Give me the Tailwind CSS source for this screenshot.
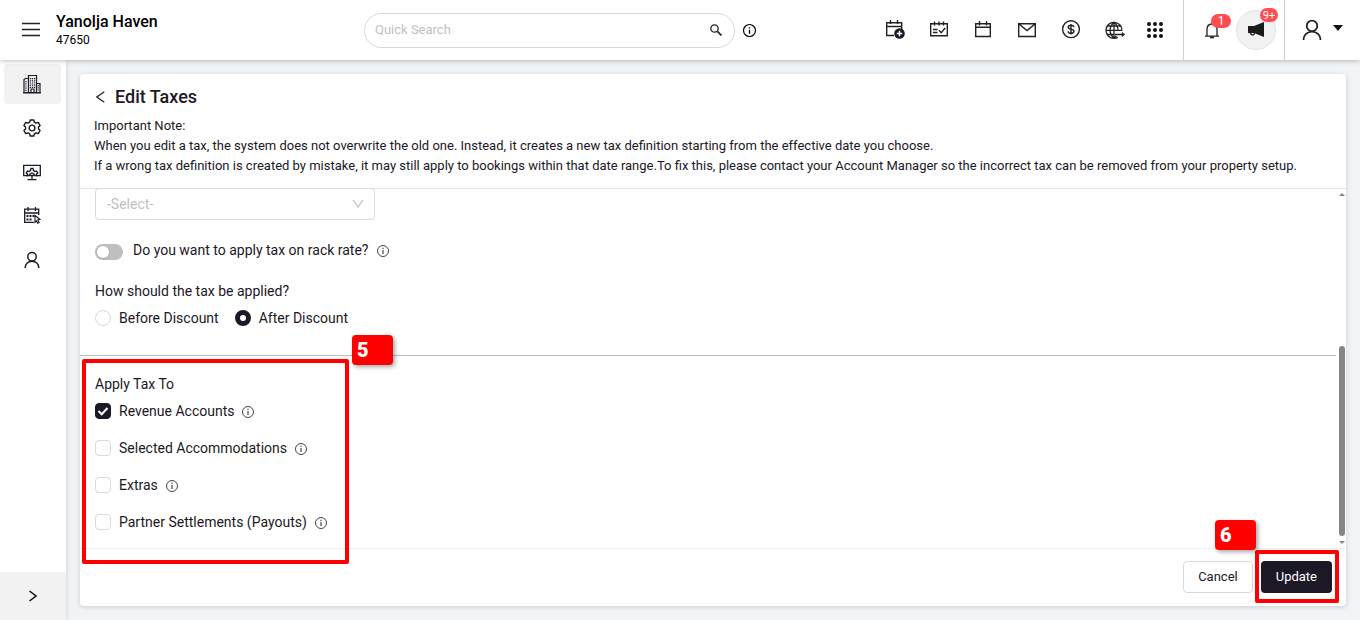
<!DOCTYPE html>
<html lang="en">
<head>
<meta charset="utf-8">
<title>Edit Taxes</title>
<script src="https://cdn.jsdelivr.net/npm/@tailwindcss/browser@4"></script>
</head>
<body class="flex min-h-screen flex-col bg-[#f0f4f7] font-['Roboto',sans-serif] text-sm text-[#1c1826]">
<svg class="hidden">
  <symbol id="info" viewBox="0 0 14 14"><circle cx="7" cy="7" r="5.5" fill="none" stroke="currentColor" stroke-width="1"/><path d="M7 6v4M7 3.8v1.2" stroke="currentColor" stroke-width="1.2"/></symbol>
  <symbol id="person" viewBox="0 0 22 24"><circle cx="11" cy="7.5" r="5.8" fill="none" stroke="currentColor" stroke-width="2"/><path d="M1.6 23c0-5.600 4.200-9.300 9.400-9.300s9.400 3.700 9.400 9.300" fill="none" stroke="currentColor" stroke-width="2"/></symbol>
</svg>

<header class="relative z-20 flex h-15 items-center bg-white shadow-[0_1px_5px_rgba(0,0,0,0.25)]">
  <div class="flex min-w-60 flex-none basis-[364px] items-center">
    <button aria-label="Menu" class="ml-[22px] mr-4"><svg class="h-4 w-[18px]" viewBox="0 0 18 16" stroke="#222" stroke-width="1.300"><path d="M0 1.500h18M0 7.500h18M0 13.500h18"/></svg></button>
    <div>
      <div class="text-base leading-5 font-medium text-black">Yanolja Haven</div>
      <div class="text-xs leading-4 text-black">47650</div>
    </div>
  </div>
  <div class="flex h-[35px] w-[371px] items-center rounded-full border border-[#d9d9d9] pl-2.5 pr-3">
    <input type="text" aria-label="Quick Search" placeholder="Quick Search" class="min-w-0 flex-1 text-[13px] outline-none placeholder:text-[#bfbfbf]">
    <button aria-label="Search"><svg class="size-3" viewBox="0 0 12 12" fill="none" stroke="#222"><circle cx="4.500" cy="4.500" r="3.700" stroke-width="1.300"/><path d="M7.300 7.300l4.200 4.200" stroke-width="1.700"/></svg></button>
  </div>
  <button aria-label="Search help" class="ml-[7px] text-black"><svg class="size-[15px]" viewBox="0 0 14 14"><circle cx="7" cy="7" r="5.600" fill="none" stroke="currentColor" stroke-width="1.100"/><path d="M7 6.200v3.800M7 4v1.200" stroke="currentColor" stroke-width="1.200"/></svg></button>

  <nav aria-label="Shortcuts" class="mr-[18px] ml-auto flex items-center gap-6">
    <button aria-label="New booking"><svg class="size-5" viewBox="0 0 20 20" fill="none" stroke="#222" stroke-width="1.400"><path d="M9 15.500H1.700V2.700h15V10M1.700 6.500h15M5.500 0v4M12.500 0v4"/><circle cx="14.500" cy="13.500" r="5.300" fill="#1c1826" stroke="none"/><path d="M14.500 10.800v5.400M11.800 13.500h5.400" stroke="#fff"/></svg></button>
    <button aria-label="Tasks"><svg class="size-5" viewBox="0 0 20 20" fill="none" stroke="#222" stroke-width="1.400"><path d="M1.700 3.700h16.600v12H1.700zM5.500 1.500v4M10 1.500v4M14.500 1.500v4M4 9.500h4.500M4 12.500h4.500M10 10.200l2.200 2.400 4-4.600"/></svg></button>
    <button aria-label="Calendar"><svg class="size-5" viewBox="0 0 20 20" fill="none" stroke="#222" stroke-width="1.400"><path d="M2.700 3.700h14.600v12.800H2.700zM2.700 7.300h14.600M6.500 1v4.500M13.500 1v4.500"/></svg></button>
    <button aria-label="Mail"><svg class="size-5" viewBox="0 0 20 20" fill="none" stroke="#222" stroke-width="1.400"><path d="M1.700 3.700h16.600v12.800H1.700zM2 4l8 6.500L18 4"/></svg></button>
    <button aria-label="Payments"><svg class="size-5" viewBox="0 0 20 20" fill="none" stroke="#222" stroke-width="1.400"><circle cx="10" cy="9.200" r="8.400"/><path d="M10 4v10.400M12.800 7.200c0-1.300-1.200-2-2.800-2s-2.800.7-2.800 2 1 1.700 2.800 2 2.900.7 2.900 2.100-1.300 2.100-2.900 2.100-2.900-.8-2.900-2.200"/></svg></button>
    <button aria-label="Website"><svg class="size-5" viewBox="0 0 20 20" fill="none" stroke="#222" stroke-width="1.300"><path d="M17 10.500A8 8 0 1 0 9 18.300c1.500 0 2.700-.3 3.800-.9M1 10.300h16M2.500 6h13.200M2.500 14.500H9M9 2.300v16M9 2.300C3.800 7 3.800 13.500 9 18.300M9 2.300c3 2.500 4.200 5.300 4 8.700M9 18.300c1-.8 1.700-1.600 2.300-2.500M10 14.500h9.500"/><path d="M16.800 11.800l3 2.700-3 2.700z" fill="#222" stroke="none"/></svg></button>
    <button aria-label="Apps" class="-ml-1"><svg class="size-5" viewBox="0 0 20 20" fill="#111"><circle cx="4" cy="4" r="2"/><circle cx="10" cy="4" r="2"/><circle cx="16" cy="4" r="2"/><circle cx="4" cy="10" r="2"/><circle cx="10" cy="10" r="2"/><circle cx="16" cy="10" r="2"/><circle cx="4" cy="16" r="2"/><circle cx="10" cy="16" r="2"/><circle cx="16" cy="16" r="2"/></svg></button>
  </nav>
  <div class="flex h-full items-center gap-3.5 border-x border-[#d0d0d0] pr-2 pl-[18px]">
    <button aria-label="Notifications" class="relative"><svg class="h-5 w-5" viewBox="0 0 20 20" fill="none" stroke="#222" stroke-width="1.300"><path d="M3 16.200h14M5 16v-6.500C5 6 7 4 10 4s5 2 5 5.500V16M10 4V2.500"/><path d="M8 16.500h4v1.800H8z" fill="#222" stroke="none"/></svg><span class="absolute -top-1.5 left-[9px] flex h-3.5 w-5 items-center justify-center rounded-full bg-[#ff4d4f] text-xs leading-none text-white">1</span></button>
    <button aria-label="Announcements" class="relative flex size-10 items-center justify-center rounded-full border border-[#e3e3e3] bg-[#f2f2f2]"><svg class="h-5 w-[18px]" viewBox="0 0 18 20" fill="#1b1b1b"><path d="M1 6h6l10-4v15L7 13H1z"/><path d="M3.500 12.500c0 3 4 3 4 .5" fill="none" stroke="#1b1b1b" stroke-width="1.300"/></svg><span class="absolute -top-[3px] left-[23px] flex h-3.5 w-[18px] items-center justify-center rounded-full bg-[#ff4d4f] text-[11px] leading-none text-white">9+</span></button>
  </div>
  <button aria-label="Account" class="flex items-center gap-[11px] pr-[17px] pl-[17px]"><svg class="h-[22px] w-5 text-[#222]"><use href="#person"/></svg><svg class="mb-1 h-1.5 w-2.5" viewBox="0 0 10 6"><path d="M0 0h10L5 6z" fill="#111"/></svg></button>
</header>

<div class="flex flex-1">
  <aside class="z-10 flex w-[66px] flex-none flex-col bg-white shadow-[0_0_5px_rgba(0,0,0,0.15)]">
    <nav aria-label="Main" class="flex flex-col gap-1 px-1 pt-1">
      <a href="#" aria-label="Property" class="flex h-10 w-[57px] items-center justify-center rounded bg-[#f2f2f2] pr-0.5"><svg class="h-5 w-[18px]" viewBox="0 0 18 20" fill="none" stroke="#1c1826" stroke-width="1.200"><path d="M5.500 18.500V1.500h8v17M5.500 4.500h-3l-1.500 1v13h16V9.500h-3.500M8 18v-3h3v3M0 18.800h18"/><path d="M7.500 4v10M9.500 4v10M11.500 4v10M3 7v10M15.200 11v6" stroke-dasharray="1.200 1"/></svg></a>
      <a href="#" aria-label="Settings" class="flex h-10 w-[57px] items-center justify-center pr-0.5"><svg class="size-[18px]" viewBox="0 0 18 18" fill="none" stroke="#1c1826" stroke-width="1.400" stroke-linejoin="round"><path d="M7.200 1h3.600l.5 2.200 1.700 1 2.300-.8 1.800 3.100L15.500 8v2l1.600 1.500-1.800 3.100-2.300-.8-1.700 1-.5 2.200H7.200l-.5-2.200-1.700-1-2.300.8-1.800-3.100L2.500 10V8L.9 6.500l1.800-3.100 2.300.8 1.700-1z"/><circle cx="9" cy="9" r="2.900"/></svg></a>
      <a href="#" aria-label="Configuration" class="flex h-10 w-[57px] items-center justify-center pr-0.5"><svg class="size-[18px]" viewBox="0 0 18 18" fill="none" stroke="#1c1826" stroke-width="1.300"><path d="M5 12.700H.7V2.300h16.600v10.400H13M9 13v3.500M4.500 16.700h9"/><path d="M4 12.500l.5-1.500-1.300-1.200L4.500 8l1.700.5L7.500 7.300 8 5.500h2l.5 1.800 1.300 1.200 1.700-.5 1.300 1.800-1.300 1.200.5 1.500zM6.500 12a2.600 2.600 0 0 1 5 0"/></svg></a>
      <a href="#" aria-label="Bookings" class="flex h-10 w-[57px] items-center justify-center pr-0.5"><svg class="size-[18px]" viewBox="0 0 18 18" fill="none" stroke="#1c1826" stroke-width="1.300"><path d="M11 15.300H1.700V2.200h14V8M1.700 6h14M5 0v4M12.500 0v4"/><path d="M3.500 9h8M3.500 12.500h6" stroke-width="2" stroke-dasharray="2 1"/><path d="M12 8.500l5 4-2.200.5 1.400 2.600-1.500.7-1.200-2.500-1.500 1.500z" fill="#fff" stroke-width="1.100"/></svg></a>
      <a href="#" aria-label="Users" class="flex h-10 w-[57px] items-center justify-center pr-0.5"><svg class="h-[18px] w-4"><use href="#person"/></svg></a>
    </nav>
    <button aria-label="Expand" class="mt-auto flex h-12 items-center justify-center bg-[#f2f2f2]"><svg class="h-3 w-2" viewBox="0 0 8 12" fill="none" stroke="#111" stroke-width="1.500"><path d="M.5 1l6.500 5-6.500 5"/></svg></button>
  </aside>

  <main class="flex min-w-0 flex-1 flex-col p-3.5">
    <section class="flex flex-1 flex-col rounded bg-white shadow-[0_1px_5px_rgba(0,0,0,0.16)]">
      <div class="border-b border-[#e3e3e3] px-3.5 pt-[11px] pb-3">
        <div class="flex items-center gap-2.5 pl-0.5">
          <button aria-label="Back"><svg class="h-3 w-[9px]" viewBox="0 0 9 12" fill="none" stroke="#222" stroke-width="1.200"><path d="M8.300.7l-7.500 5.300 7.500 5.300"/></svg></button>
          <h1 class="text-lg leading-6 font-medium">Edit Taxes</h1>
        </div>
        <p class="mt-[7px] text-[13px] leading-5">Important Note:<br>When you edit a tax, the system does not overwrite the old one. Instead, it creates a new tax definition starting from the effective date you choose.<br>If a wrong tax definition is created by mistake, it may still apply to bookings within that date range.To fix this, please contact your Account Manager so the incorrect tax can be removed from your property setup.</p>
      </div>

      <div class="flex flex-1 border-b border-[#eee]">
        <form class="min-w-0 flex-1 leading-[22px]">
          <div class="px-[15px]">
            <div class="relative -mt-px w-[280px]">
              <select aria-label="Tax option" class="h-8 w-full appearance-none rounded border border-[#d9d9d9] px-[11px] text-sm text-[#bfbfbf]"><option>-Select-</option></select>
              <svg class="pointer-events-none absolute top-3 right-[11px] h-2 w-3" viewBox="0 0 12 8" fill="none" stroke="#bfbfbf" stroke-width="1.200"><path d="M1 0l5 7 5-7"/></svg>
            </div>
            <div class="mt-[19px] flex items-center">
              <input id="rack" type="checkbox" role="switch" class="mt-1 h-4 w-7 appearance-none rounded-full bg-[#bfbfbf] before:m-0.5 before:block before:size-3 before:rounded-full before:bg-white before:shadow-sm">
              <label for="rack" class="ml-2.5">Do you want to apply tax on rack rate?</label>
              <svg class="mt-0.5 ml-[7px] size-3.5 text-[#444]"><use href="#info"/></svg>
            </div>
            <fieldset>
              <legend class="pt-[19px]">How should the tax be applied?</legend>
              <div class="mt-[5px] flex gap-4">
                <label class="flex items-center gap-2"><input type="radio" name="apply" class="size-4 appearance-none rounded-full border border-[#d9d9d9] bg-white">Before Discount</label>
                <label class="flex items-center gap-2"><input type="radio" name="apply" checked class="size-4 appearance-none rounded-full border-5 border-[#1c1826] bg-white">After Discount</label>
              </div>
            </fieldset>
          </div>
          <hr class="mt-[26px] border-[#bdbdbd]">
          <div class="relative px-[15px] pb-[15px]">
            <fieldset>
              <legend class="pt-[17px]">Apply Tax To</legend>
              <div class="mt-[5px] flex flex-col gap-[15px]">
                <div class="flex items-center gap-2"><span class="relative flex"><input id="rev" type="checkbox" checked class="size-4 appearance-none rounded border border-[#d9d9d9] checked:border-[#1c1826] checked:bg-[#1c1826]"><svg class="pointer-events-none absolute inset-0 size-4" viewBox="0 0 16 16" fill="none" stroke="#fff" stroke-width="2"><path d="M3.500 8l3.200 3.200L12.500 5"/></svg></span><label for="rev">Revenue Accounts</label><svg class="mt-0.5 -ml-px size-3.5 text-[#444]"><use href="#info"/></svg></div>
                <div class="flex items-center gap-2"><input id="acc" type="checkbox" class="size-4 appearance-none rounded border border-[#d9d9d9]"><label for="acc">Selected Accommodations</label><svg class="mt-0.5 -ml-px size-3.5 text-[#444]"><use href="#info"/></svg></div>
                <div class="flex items-center gap-2"><input id="ext" type="checkbox" class="size-4 appearance-none rounded border border-[#d9d9d9]"><label for="ext">Extras</label><svg class="mt-0.5 -ml-px size-3.5 text-[#444]"><use href="#info"/></svg></div>
                <div class="flex items-center gap-2"><input id="pay" type="checkbox" class="size-4 appearance-none rounded border border-[#d9d9d9]"><label for="pay">Partner Settlements (Payouts)</label><svg class="mt-0.5 -ml-px size-3.5 text-[#444]"><use href="#info"/></svg></div>
              </div>
            </fieldset>
            <!-- Step 5 callout -->
            <div class="pointer-events-none absolute top-[3px] -bottom-4 left-0.5 w-[267px] rounded-xs border-4 border-[#f00]"></div>
            <span class="absolute -top-[21px] left-[272px] flex h-[30px] w-[41px] items-center rounded bg-[#f00] pl-[5px] font-['Liberation_Sans_Narrow','Roboto',sans-serif] text-xl font-black text-white shadow-[2px_2px_4px_rgba(0,0,0,0.35)]">5</span>
          </div>
        </form>
        <div class="flex w-2.5 flex-none flex-col items-center justify-between pt-1 pr-px pl-px pb-1">
          <svg class="ml-px h-[3px] w-1.5" viewBox="0 0 6 3" fill="#858585"><path d="M0 3h6L3 0z"/></svg>
          <div class="mt-auto mb-[5px] ml-px h-[190px] w-1.5 rounded-full bg-[#858585]"></div>
          <svg class="ml-px h-[3px] w-1.5" viewBox="0 0 6 3" fill="#858585"><path d="M0 0h6L3 3z"/></svg>
        </div>
      </div>

      <div class="flex justify-end gap-2 px-3.5 pt-3 pb-[13px] text-[13px]">
        <button class="h-8 rounded border border-[#d9d9d9] px-3.5">Cancel</button>
        <div class="relative">
          <button class="h-8 rounded bg-[#1c1826] px-[15px] text-white">Update</button>
          <!-- Step 6 callout -->
          <div class="pointer-events-none absolute -top-[11px] -right-[7px] -bottom-2.5 -left-1.5 rounded-xs border-4 border-[#f00]"></div>
          <span class="absolute -top-[41px] right-[76px] flex h-[30px] w-[41px] items-center rounded bg-[#f00] pl-[5px] font-['Liberation_Sans_Narrow','Roboto',sans-serif] text-xl font-black text-white shadow-[2px_2px_4px_rgba(0,0,0,0.35)]">6</span>
        </div>
      </div>
    </section>
  </main>
</div>
</body>
</html>
